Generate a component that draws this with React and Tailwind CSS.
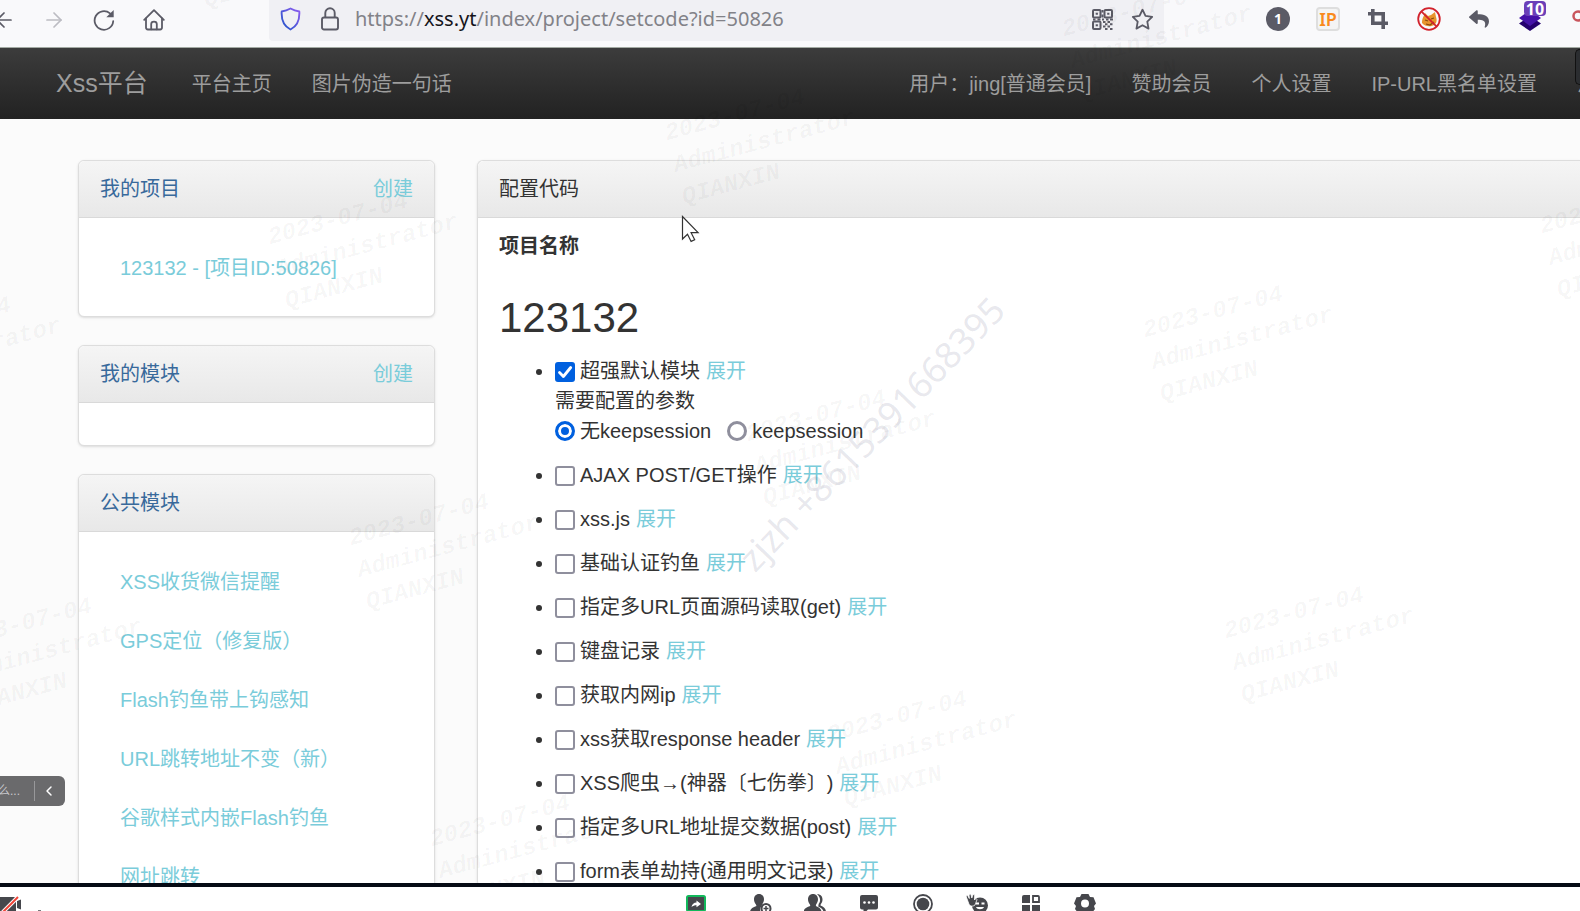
import React from 'react';
import { ArrowLeft, ArrowRight, ChevronLeft } from 'lucide-react';
import { FaReply } from 'react-icons/fa';

const publicModules = ['XSS收货微信提醒', 'GPS定位（修复版）', 'Flash钓鱼带上钩感知', 'URL跳转地址不变（新）', '谷歌样式内嵌Flash钓鱼', '网址跳转'];

const modules = [
  'AJAX POST/GET操作',
  'xss.js',
  '基础认证钓鱼',
  '指定多URL页面源码读取(get)',
  '键盘记录',
  '获取内网ip',
  'xss获取response header',
  'XSS爬虫→(神器〔七伤拳〕)',
  '指定多URL地址提交数据(post)',
  'form表单劫持(通用明文记录)',
];

/* Grid steps of the repeated security watermark. */
const stamps = [[0, 0], [0, 1], [0, -1], [0, -2], [0, -3], [-1, -1], [-1, -2], [-1, -3], [-1, 0], [-2, -2], [1, 0], [1, -1], [1, -2]];

function Toolbar() {
  return (
    <header className="flex h-12 shrink-0 items-start border-b border-[#a3aaa3] bg-[#f9f9fb] text-[#5b5b66]">
      <div className="-ml-[7px] flex h-[39px] w-[276px] shrink-0 items-center gap-7">
        <button aria-label="后退"><ArrowLeft size={24} strokeWidth={1.7} className="-mx-px" /></button>
        <button aria-label="前进" className="text-[#bcbcc2]"><ArrowRight size={24} strokeWidth={1.7} className="-mx-px" /></button>
        <button aria-label="刷新">
          <svg width="22" height="22" viewBox="0 0 22 22" fill="none" stroke="currentColor" strokeWidth="1.8" strokeLinecap="round">
            <path d="M20.2 12.2A9.3 9.3 0 1 1 17 4.4" />
            <path d="M20.7 1v7.2h-7.4z" fill="currentColor" stroke="none" />
          </svg>
        </button>
        <button aria-label="主页">
          <svg width="22" height="22" viewBox="0 0 22 22" fill="none" stroke="currentColor" strokeWidth="1.8" strokeLinejoin="round" strokeLinecap="round">
            <path d="M1.2 10.8 11 1.2l9.8 9.6" />
            <path d="M3 9.4v9.2c0 1.2.6 1.9 1.9 1.9h12.2c1.300 0 1.900-.7 1.900-1.900V9.400" />
            <path d="M8.200 20.300v-5.200c0-1.600 1.100-2.500 2.800-2.500s2.800.9 2.800 2.500v5.200" />
          </svg>
        </button>
      </div>
      <div className="flex h-[41px] min-w-0 flex-1 items-center rounded-b bg-[#f0f0f4] pb-[3px] pl-[11px] pr-2.5">
        <svg className="shrink-0" width="21" height="24" viewBox="0 0 21 24" fill="none">
          <defs>
            <linearGradient id="shield" x1="1" y1="0" x2="0" y2="1">
              <stop offset="0" stopColor="#8f5cf0" />
              <stop offset="1" stopColor="#1f55c8" />
            </linearGradient>
          </defs>
          <path d="M10.500 1.500c3 1.700 6 2.600 8.800 3 .5 8-1.800 14.500-8.800 18C3.500 19 1.200 12.500 1.700 4.500c2.800-.4 5.800-1.300 8.800-3z" stroke="url(#shield)" strokeWidth="1.9" strokeLinejoin="round" />
        </svg>
        <svg className="ml-5 shrink-0" width="18" height="24" viewBox="0 0 18 24" fill="none" stroke="currentColor" strokeWidth="1.9">
          <rect x="1" y="10.500" width="16" height="12" rx="2" />
          <path d="M4.300 10.500V6a4.700 4.700 0 0 1 9.400 0v4.500" />
        </svg>
        <div role="textbox" aria-label="地址栏" className="ml-4 min-w-0 flex-1 truncate font-['Noto_Sans'] text-xl leading-7 text-[#828288]">
          https://<span className="text-[#15141a]">xss.yt</span>/index/project/setcode?id=50826
        </div>
        <button aria-label="二维码">
          <svg width="21" height="21" viewBox="0 0 21 21" fill="none" stroke="currentColor" strokeWidth="2">
            <rect x="1" y="1" width="7.500" height="7.500" rx="1" />
            <rect x="12.500" y="1" width="7.500" height="7.500" rx="1" />
            <rect x="1" y="12.500" width="7.500" height="7.500" rx="1" />
            <path d="M3.700 4.750h2.200M15.200 4.750h2.200M3.700 16.250h2.200M10.500 1v2.500M10.500 5.500v3M1 10.500h2.500M5.500 10.500h3M10 10.500h2M14 10.500h2.500M18 10.500h3M11 13h2.500M15.500 13h2.500M13 15.300h2.500M18 15.300h2.500M11 17.600h2.500M15.500 17.600h2.500M13 20h2.500M18 20h2.500" />
          </svg>
        </button>
        <button aria-label="收藏" className="ml-[18px]">
          <svg width="23" height="23" viewBox="0 0 24 24" fill="none" stroke="currentColor" strokeWidth="1.900" strokeLinejoin="round">
            <path d="M12 1.800l3.100 6.500 7 1-5.100 5 1.300 7.200L12 18l-6.300 3.500L7 14.300l-5.100-5 7-1z" />
          </svg>
        </button>
      </div>
      <div className="flex h-[38px] w-[416px] shrink-0 items-center gap-[26px] overflow-hidden pl-[102px]">
        <button aria-label="扩展" className="flex size-6 shrink-0 items-center justify-center rounded-full bg-[#5b5b66] font-['Noto_Sans'] text-sm font-bold text-white">1</button>
        <button aria-label="IP 工具" className="flex size-6 shrink-0 items-center justify-center rounded border-2 border-[#dedede] bg-[#f4f4f4] font-['Noto_Sans'] text-lg font-semibold leading-5 text-[#f98a1c]">IP</button>
        <button aria-label="截图" className="flex size-6 shrink-0 items-center justify-center">
          <svg width="20" height="20" viewBox="0 0 20 20" fill="none" stroke="currentColor" strokeWidth="3.600">
            <path d="M4.800 0v14.200H20M0 4.800h15.200V20" />
          </svg>
        </button>
        <button aria-label="NoScript" className="ml-px size-6 shrink-0">
          <svg width="24" height="24" viewBox="0 0 24 24" fill="none">
            <path d="M5 16c0-5 2-7 3-10l3 3 3-1 4-3 1 5c1 3 1 6-2 8-3 2-9 2-12-2z" fill="#e8952e" />
            <path d="M8 13l3 1M14 12l3-1M9 17l4 1 4-3" stroke="#8a4a10" strokeWidth="1.200" />
            <circle cx="12" cy="12" r="10.800" stroke="#d2222c" strokeWidth="1.800" />
            <path d="M4.300 4.300l15.400 15.400" stroke="#d2222c" strokeWidth="1.800" />
          </svg>
        </button>
        <button aria-label="撤销" className="flex size-6 shrink-0 items-center justify-center"><FaReply size={20} /></button>
        <button aria-label="书签扩展" className="relative ml-px size-6 shrink-0">
          <svg width="24" height="24" viewBox="0 0 24 24">
            <path d="M1 16.500 12 9l11 7.500L12 24z" fill="#25006e" />
            <path d="M1 11 12 3l11 8-11 8z" fill="#4513a8" />
          </svg>
          <span className="absolute -top-1.5 left-1.5 flex h-[15px] w-[22px] items-center justify-center rounded-sm bg-[#6a3fb8] font-['Noto_Sans'] text-base font-bold text-white">10</span>
        </button>
        <button aria-label="密钥" className="ml-px size-6 shrink-0">
          <svg width="24" height="24" viewBox="0 0 24 24" fill="none">
            <circle cx="9" cy="9" r="4.500" stroke="#c9555c" strokeWidth="2.500" />
            <path d="M12 12l6 7" stroke="#c9555c" strokeWidth="2.500" />
          </svg>
        </button>
      </div>
    </header>
  );
}

function Nav() {
  return (
    <nav className="relative flex h-[71px] shrink-0 items-center gap-10 overflow-hidden whitespace-nowrap bg-linear-to-b from-[#3c3c3c] to-[#222222] pl-14 text-[#9d9d9d]">
      <a href="#home" className="mr-1 text-[25px]">Xss平台</a>
      <a href="#index">平台主页</a>
      <a href="#image">图片伪造一句话</a>
      <div className="ml-auto flex gap-10">
        <a href="#user">用户：jing[普通会员]</a>
        <a href="#sponsor">赞助会员</a>
        <a href="#settings">个人设置</a>
        <a href="#blacklist">IP-URL黑名单设置</a>
        <a href="#logout" className="w-[3px]">注销</a>
      </div>
      <span className="absolute right-0 top-px h-9 w-[5px] rounded-l-md border border-r-0 border-[#111111] bg-[#2b2d30]" />
    </nav>
  );
}

function Panel({ title, action, className, titleClass, children }) {
  return (
    <section className={`border border-[#dddddd] bg-white shadow-sm ${className}`}>
      <div className="flex justify-between border-b border-[#d9d9d9] bg-linear-to-b from-[#f5f5f5] to-[#e8e8e8] px-[21px] py-3.5 leading-7">
        <h3 className={titleClass}>{title}</h3>
        {action && <a href="#create" className="text-[#7accda]">{action}</a>}
      </div>
      {children}
    </section>
  );
}

function SidePanel({ title, action, links }) {
  return (
    <Panel title={title} action={action} className="rounded-md [&>div]:rounded-t-md" titleClass="text-[#38699b]">
      <ul className="min-h-[42px] pb-[19px] pl-[41px] pt-5">
        {links.map((l) => (
          <li key={l} className="flex h-[59px] items-center"><a href="#item" className="text-[#7accda]">{l}</a></li>
        ))}
      </ul>
    </Panel>
  );
}

function Check({ label, defaultChecked }) {
  return (
    <label className="inline-flex items-center gap-[5px] align-top">
      <span className="grid">
        <input type="checkbox" defaultChecked={defaultChecked} className="peer col-start-1 row-start-1 size-5 appearance-none rounded-[3px] border-2 border-[#8f8f9d] bg-white checked:border-[#0060df] checked:bg-[#0060df]" />
        <svg className="pointer-events-none col-start-1 row-start-1 hidden size-5 peer-checked:block" viewBox="0 0 20 20" fill="none" stroke="white" strokeWidth="2.800" strokeLinecap="round" strokeLinejoin="round">
          <path d="M4.500 10.500l3.900 4 7.300-9" />
        </svg>
      </span>
      {label}
    </label>
  );
}

function Radio({ label, defaultChecked }) {
  return (
    <label className="flex items-center gap-[5px]">
      <input type="radio" name="keepsession" defaultChecked={defaultChecked} className="size-5 appearance-none rounded-full border-[3px] border-[#8f8f9d] bg-white checked:border-[#0060df] checked:bg-[#0060df] checked:shadow-[inset_0_0_0_3px_white]" />
      {label}
    </label>
  );
}

function Expand() {
  return <a href="#expand" className="ml-1.5 text-[#7accda]">展开</a>;
}

function Watermarks() {
  return (
    <div aria-hidden="true" className="pointer-events-none absolute inset-0 overflow-hidden">
      {stamps.map(([i, j]) => (
        <div
          key={`${i}.${j}`}
          className="absolute origin-top-left -rotate-15 whitespace-pre font-['Liberation_Mono'] text-2xl font-bold italic leading-[33px] text-black/4"
          style={{ left: 1139 + 81 * i + 397 * j, top: 315 + 301 * i - 104 * j }}
        >
          {'2023-07-04\nAdministrator\nQIANXIN'}
        </div>
      ))}
      <div className="absolute left-[872px] top-[434px] -translate-x-1/2 -translate-y-1/2 -rotate-46 whitespace-nowrap font-['Noto_Sans'] text-[36px] text-[#50557a]/14">
        zjzh +8615391668395
      </div>
      <svg className="absolute left-[681px] top-[215px]" width="19" height="28" viewBox="0 0 19 28" fill="white" stroke="#333" strokeWidth="1.200">
        <path d="M1.500 1.500v22.500l5-4.800 3.600 7.200 3.600-1.700-3.600-7h7z" />
      </svg>
    </div>
  );
}

function Slot({ label, className = '', children }) {
  return (
    <button aria-label={label} className={`w-[22px] shrink-0 ${className}`}>
      <svg width="22" height="22" viewBox="0 0 22 22" fill="#46474c">{children}</svg>
    </button>
  );
}

function MeetingBar() {
  return (
    <footer className="h-7 shrink-0 overflow-hidden border-t-4 border-[#050a14] bg-white">
      <div className="relative flex justify-center pl-[200px] pt-[7px]">
        <div className="absolute left-0 top-[7px]">
          <Slot label="开启视频">
            <rect x="-4" y="3" width="20" height="16" rx="2" />
            <path d="M17 7l4-1.500v10L17 14z" />
            <path d="M1 20 18 3" stroke="white" strokeWidth="4" />
            <path d="M1 20 18 3" stroke="#f04438" strokeWidth="2" />
          </Slot>
          <span className="absolute left-[38px] top-4 h-0.5 w-[3px] bg-[#77787c]" />
        </div>
        <div className="flex gap-8">
          <Slot label="共享屏幕" className="mr-[11px]">
            <rect x="2" y="2" width="18" height="15" rx="1.500" stroke="#12b85b" strokeWidth="2" />
            <path d="M6.500 13c.5-3 2.500-4.500 5-4.500V6.500l4.500 3.500-4.500 3.300v-2c-2 0-3.500.5-5 1.700z" fill="white" />
          </Slot>
          <Slot label="邀请">
            <path d="M9 0c3.200 0 5 2.300 5 5.300 0 2-.8 3.700-1.800 5l-.5 1.700C10 13.500 10 16 10.500 18H0c0-3 2.500-4.500 6.500-6l-.7-1.700C4.800 9 4 7.300 4 5.300 4 2.300 5.800 0 9 0z" />
            <circle cx="16" cy="14.500" r="4.500" fill="white" stroke="#46474c" strokeWidth="2" />
            <path d="M13.500 14.500h5M16 12v5" stroke="#46474c" strokeWidth="1.500" />
          </Slot>
          <Slot label="成员">
            <path d="M9 0c3 0 5 2.200 5 5.300 0 2-.8 3.700-1.800 5l-.4 1.700c3.500 1.500 5.700 3 5.700 6H-.5c0-3 2.500-4.500 6.800-6l-.5-1.700C4.800 9 4 7.300 4 5.300 4 2.200 6 0 9 0z" />
            <path d="M13 0c4.500.5 5.500 3 5.500 5.500 0 2-.8 3.500-1.800 4.700l-.2 1.300c3.500 1.500 5.500 3.500 5.500 6.500h-2.500c-.2-2.500-2-4-5.300-5.500l.5-2.800C17 7 16.500 3 13 0z" />
          </Slot>
          <Slot label="聊天">
            <path d="M4 1h14a2 2 0 0 1 2 2v10.500a2 2 0 0 1-2 2h-8L5.500 20v-4.500H4a2 2 0 0 1-2-2V3a2 2 0 0 1 2-2z" />
            <g fill="white"><circle cx="6.500" cy="8.500" r="1.300" /><circle cx="11" cy="8.500" r="1.300" /><circle cx="15.500" cy="8.500" r="1.300" /></g>
          </Slot>
          <Slot label="录制">
            <circle cx="11" cy="10" r="9" fill="none" stroke="#46474c" strokeWidth="1.800" />
            <circle cx="11" cy="10" r="6.300" />
          </Slot>
          <Slot label="表情">
            <circle cx="14" cy="11.500" r="8" />
            <path d="M0 2l1.500-.7 1.800 3.200L3 .5 4.800 0l1 4L7 .5l1.700.3L8.500 6l1.500-1.500 1 1.200-2 5.300c-2.500 2-5 1-6-.7z" stroke="white" strokeWidth=".8" />
            <path d="M10 9.500h3M15.500 9.500h3" stroke="white" strokeWidth="1.800" />
            <path d="M10 13c1 3 7 3 8 0z" fill="white" />
          </Slot>
          <Slot label="应用">
            <path d="M4 1h6v8H2V3a2 2 0 0 1 2-2zM2 11h8v8H4a2 2 0 0 1-2-2zM12 11h8v6a2 2 0 0 1-2 2h-6z" />
            <path d="M13 2h5a1 1 0 0 1 1 1v5h-6z" fill="none" stroke="#46474c" strokeWidth="1.800" />
          </Slot>
          <Slot label="设置">
            <path fillRule="evenodd" d="M7.500 0h7l1.500 3 3.500.2L22 9.500 20 12l1 3-3.500 4.500h-13L1 15l1-3-2-2.500 2.500-6.300L6 3zM11 5.500a4 4 0 1 0 0 8 4 4 0 0 0 0-8z" />
          </Slot>
        </div>
      </div>
    </footer>
  );
}

export default function App() {
  return (
    <div className="flex h-screen flex-col overflow-hidden bg-[#fbfbfb] font-['Liberation_Sans','Noto_Sans_CJK_SC',sans-serif] text-xl text-[#333333] [text-spacing-trim:space-all]">
      <div className="relative flex min-h-0 flex-1 flex-col overflow-hidden">
        <Toolbar />
        <Nav />
        <main className="flex min-h-0 flex-1 items-start gap-[42px] overflow-hidden pl-[78px] pt-[41px]">
          <aside className="flex w-[357px] shrink-0 flex-col gap-7">
            <SidePanel title="我的项目" action="创建" links={['123132 - [项目ID:50826]']} />
            <SidePanel title="我的模块" action="创建" links={[]} />
            <SidePanel title="公共模块" links={publicModules} />
          </aside>
          <Panel title="配置代码" className="min-w-0 flex-1 rounded-l-md border-r-0 [&>div]:rounded-tl-md">
            <div className="px-[21px] pt-3.5 leading-[29px]">
              <p className="font-bold">项目名称</p>
              <h1 className="mb-4 mt-[34px] text-[42px] leading-[46px]">123132</h1>
              <ul className="flex list-disc flex-col gap-[15px] pl-14">
                <li>
                  <Check label="超强默认模块" defaultChecked />
                  <Expand />
                  <p className="leading-[30px]">需要配置的参数</p>
                  <div className="flex gap-4 leading-[30px]">
                    <Radio label="无keepsession" defaultChecked />
                    <Radio label="keepsession" />
                  </div>
                </li>
                {modules.map((m) => (
                  <li key={m}>
                    <Check label={m} />
                    <Expand />
                  </li>
                ))}
              </ul>
            </div>
          </Panel>
        </main>
        <Watermarks />
        <button aria-label="展开字幕" className="absolute left-0 top-[776px] flex h-[30px] w-[65px] items-center overflow-hidden rounded-r-md bg-[#6a6a6c] text-xs text-[#c8c8cc]">
          <span className="-ml-0.5 w-9 pr-3.5 text-right">么...</span>
          <span className="h-5 w-px bg-[#98989a]" />
          <ChevronLeft size={16} strokeWidth={2.2} className="ml-1.5 text-white" />
        </button>
      </div>
      <MeetingBar />
    </div>
  );
}
